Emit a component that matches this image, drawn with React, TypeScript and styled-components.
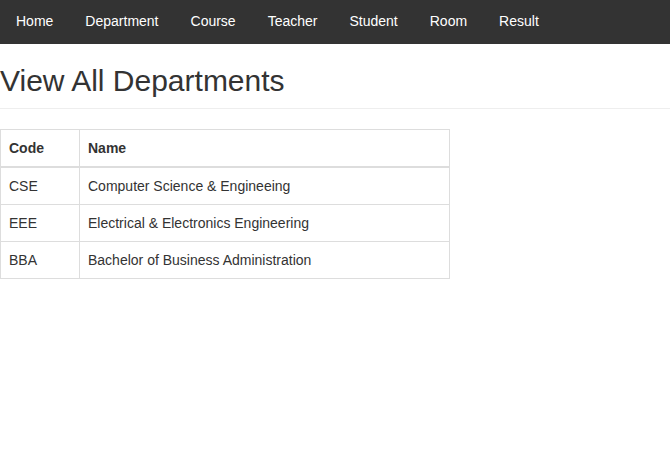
import React from "react";
import styled, { createGlobalStyle } from "styled-components";

const Global = createGlobalStyle`
  html, body { margin: 0; padding: 0; background: #fff; }
  body {
    font-family: "Liberation Sans", Arial, sans-serif;
    font-size: 14px;
    line-height: 1.42857;
    color: #333;
  }
  * { box-sizing: border-box; }
`;

const NavBar = styled.nav`
  display: flex;
  background: #333;
  height: 44px;
`;

const NavLink = styled.a`
  display: block;
  color: #fff;
  text-decoration: none;
  padding: 11px 16px 13px;
  font-size: 14px;
  line-height: 20px;
`;

const Title = styled.h2`
  margin: 20px 0 20px;
  padding-bottom: 11px;
  border-bottom: 1px solid #eee;
  font-size: 30px;
  font-weight: 400;
  line-height: 33px;
  color: #333;
`;

const Table = styled.table`
  width: 450px;
  border-collapse: collapse;
  border: 1px solid #ddd;
`;

const Th = styled.th<{ $w?: number }>`
  text-align: left;
  font-weight: 700;
  padding: 8px;
  line-height: 20px;
  border: 1px solid #ddd;
  border-bottom: 2px solid #ddd;
  width: ${(p) => (p.$w ? `${p.$w}px` : "auto")};
`;

const Td = styled.td`
  padding: 8px;
  line-height: 20px;
  border: 1px solid #ddd;
`;

const links = ["Home", "Department", "Course", "Teacher", "Student", "Room", "Result"];
const rows = [
  ["CSE", "Computer Science & Engineeing"],
  ["EEE", "Electrical & Electronics Engineering"],
  ["BBA", "Bachelor of Business Administration"],
];

export default function App() {
  return (
    <>
      <Global />
      <NavBar>
        {links.map((l) => (
          <NavLink key={l} href="#">
            {l}
          </NavLink>
        ))}
      </NavBar>
      <Title>View All Departments</Title>
      <Table>
        <thead>
          <tr>
            <Th $w={79}>Code</Th>
            <Th>Name</Th>
          </tr>
        </thead>
        <tbody>
          {rows.map(([c, n]) => (
            <tr key={c}>
              <Td>{c}</Td>
              <Td>{n}</Td>
            </tr>
          ))}
        </tbody>
      </Table>
    </>
  );
}
